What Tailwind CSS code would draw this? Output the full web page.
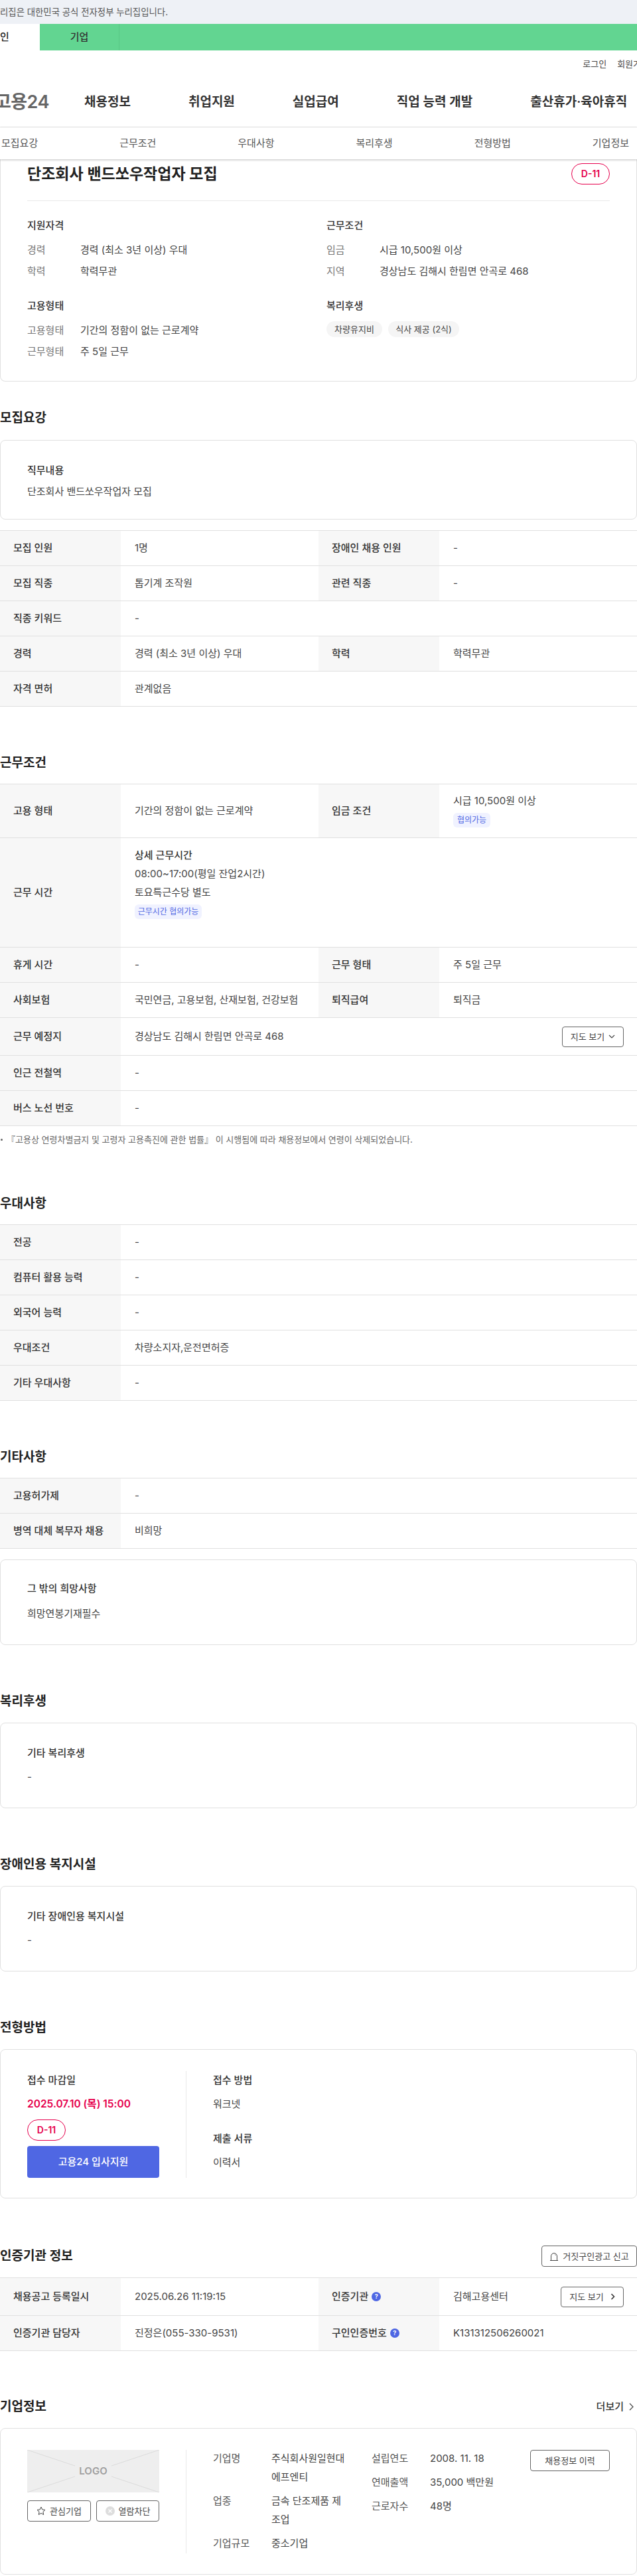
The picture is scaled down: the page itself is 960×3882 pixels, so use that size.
<!DOCTYPE html>
<html lang="ko">
<head>
    <meta charset="UTF-8">
    <title>고용24 채용정보</title>
    <script src="https://cdn.jsdelivr.net/npm/@tailwindcss/browser@4"></script>
</head>
<body class="bg-white">
<div class="w-[960px] overflow-hidden font-[Inter,'Noto_Sans_CJK_KR',sans-serif] text-[15px] leading-6 text-[#444]">

    <!-- top banner -->
    <div class="h-9 bg-[#eef1f6] flex items-center">
        <div class="w-[253px] flex justify-end whitespace-nowrap text-[13.4px] text-[#555]">이 누리집은 대한민국 공식 전자정부 누리집입니다.</div>
    </div>
    <div class="h-10 bg-[#62d591] flex">
        <div class="w-[120px] -ml-[60px] shrink-0 bg-white flex items-center justify-center font-medium text-[#222]">개인</div>
        <div class="w-[120px] shrink-0 border-r border-[#58c786] flex items-center justify-center font-medium text-[#333]">기업</div>
    </div>

    <!-- header -->
    <div class="h-10 flex items-center justify-end gap-4 -mr-[18px] text-[13px] text-[#444]">
        <span class="whitespace-nowrap">로그인</span>
        <span class="whitespace-nowrap">회원가입</span>
    </div>
    <div class="h-[76px] flex items-center border-b border-[#e8e8e8]">
        <div class="w-[74px] shrink-0 flex justify-end whitespace-nowrap text-[27px] font-semibold tracking-[-0.5px] text-[#666]">고용24</div>
        <nav class="ml-[53px] flex gap-[87px] text-[19px] font-semibold text-[#333] whitespace-nowrap">
            <a>채용정보</a>
            <a>취업지원</a>
            <a>실업급여</a>
            <a>직업 능력 개발</a>
            <a>출산휴가·육아휴직</a>
        </nav>
    </div>
    <div class="relative z-10 h-12 pl-[2px] pr-3 flex items-center justify-between bg-white text-[#555] shadow-[0_1px_3px_rgba(0,0,0,0.25)]">
        <a>모집요강</a><a>근무조건</a><a>우대사항</a><a>복리후생</a><a>전형방법</a><a>기업정보</a>
    </div>

    <!-- summary card -->
    <div class="h-[335px] px-10 pt-[6px] border-x border-b border-[#e0e0e0] rounded-b-lg">
        <div class="pb-6 border-b border-[#e8e8e8] flex items-center justify-between">
            <h1 class="text-[23px] font-semibold text-[#222]">단조회사 밴드쏘우작업자 모집</h1>
            <span class="w-[58px] h-8 rounded-2xl border border-[#e6004d] flex items-center justify-center text-sm font-semibold text-[#e6004d]">D-11</span>
        </div>
        <div class="mt-[25px] grid grid-cols-[451px_1fr]">
            <div>
                <h3 class="font-medium text-[#333]">지원자격</h3>
                <div class="mt-[13px] flex flex-col gap-2">
                    <div class="flex"><span class="w-20 text-[#777]">경력</span><span>경력 (최소 3년 이상) 우대</span></div>
                    <div class="flex"><span class="w-20 text-[#777]">학력</span><span>학력무관</span></div>
                </div>
                <h3 class="mt-7 font-medium text-[#333]">고용형태</h3>
                <div class="mt-[13px] flex flex-col gap-2">
                    <div class="flex"><span class="w-20 text-[#777]">고용형태</span><span>기간의 정함이 없는 근로계약</span></div>
                    <div class="flex"><span class="w-20 text-[#777]">근무형태</span><span>주 5일 근무</span></div>
                </div>
            </div>
            <div>
                <h3 class="font-medium text-[#333]">근무조건</h3>
                <div class="mt-[13px] flex flex-col gap-2">
                    <div class="flex"><span class="w-20 text-[#777]">임금</span><span>시급 10,500원 이상</span></div>
                    <div class="flex"><span class="w-20 text-[#777]">지역</span><span>경상남도 김해시 한림면 안곡로 468</span></div>
                </div>
                <h3 class="mt-7 font-medium text-[#333]">복리후생</h3>
                <div class="mt-[11px] flex gap-[9px] text-[13px]">
                    <span class="h-6 w-[84px] rounded-xl bg-[#f5f5f5] flex items-center justify-center">차량유지비</span>
                    <span class="h-6 w-[107px] rounded-xl bg-[#f5f5f5] flex items-center justify-center">식사 제공 (2식)</span>
                </div>
            </div>
        </div>
    </div>

    <!-- 모집요강 -->
    <h2 class="mt-10 h-[30px] text-[19px] leading-[30px] font-semibold text-[#222]">모집요강</h2>
    <div class="mt-[18px] h-[120px] px-10 pt-[33px] border border-[#e0e0e0] rounded-lg">
        <h3 class="font-medium text-[#333]">직무내용</h3>
        <p class="mt-2">단조회사 밴드쏘우작업자 모집</p>
    </div>
    <div class="mt-4 border-t border-[#e0e0e0]">
        <div class="h-[53px] flex border-b border-[#e0e0e0]">
            <div class="w-[182px] shrink-0 pl-5 bg-[#f7f7f7] flex items-center font-medium text-[#333]">모집 인원</div>
            <div class="w-[298px] shrink-0 pl-[21px] flex items-center">1명</div>
            <div class="w-[182px] shrink-0 pl-5 bg-[#f7f7f7] flex items-center font-medium text-[#333]">장애인 채용 인원</div>
            <div class="flex-1 pl-[21px] flex items-center">-</div>
        </div>
        <div class="h-[53px] flex border-b border-[#e0e0e0]">
            <div class="w-[182px] shrink-0 pl-5 bg-[#f7f7f7] flex items-center font-medium text-[#333]">모집 직종</div>
            <div class="w-[298px] shrink-0 pl-[21px] flex items-center">톱기계 조작원</div>
            <div class="w-[182px] shrink-0 pl-5 bg-[#f7f7f7] flex items-center font-medium text-[#333]">관련 직종</div>
            <div class="flex-1 pl-[21px] flex items-center">-</div>
        </div>
        <div class="h-[53px] flex border-b border-[#e0e0e0]">
            <div class="w-[182px] shrink-0 pl-5 bg-[#f7f7f7] flex items-center font-medium text-[#333]">직종 키워드</div>
            <div class="flex-1 pl-[21px] flex items-center">-</div>
        </div>
        <div class="h-[53px] flex border-b border-[#e0e0e0]">
            <div class="w-[182px] shrink-0 pl-5 bg-[#f7f7f7] flex items-center font-medium text-[#333]">경력</div>
            <div class="w-[298px] shrink-0 pl-[21px] flex items-center">경력 (최소 3년 이상) 우대</div>
            <div class="w-[182px] shrink-0 pl-5 bg-[#f7f7f7] flex items-center font-medium text-[#333]">학력</div>
            <div class="flex-1 pl-[21px] flex items-center">학력무관</div>
        </div>
        <div class="h-[53px] flex border-b border-[#e0e0e0]">
            <div class="w-[182px] shrink-0 pl-5 bg-[#f7f7f7] flex items-center font-medium text-[#333]">자격 면허</div>
            <div class="flex-1 pl-[21px] flex items-center">관계없음</div>
        </div>
    </div>

    <!-- 근무조건 -->
    <h2 class="mt-[70px] h-[30px] text-[19px] leading-[30px] font-semibold text-[#222]">근무조건</h2>
    <div class="mt-4 border-t border-[#e0e0e0]">
        <div class="h-[81px] flex border-b border-[#e0e0e0]">
            <div class="w-[182px] shrink-0 pl-5 bg-[#f7f7f7] flex items-center font-medium text-[#333]">고용 형태</div>
            <div class="w-[298px] shrink-0 pl-[21px] flex items-center">기간의 정함이 없는 근로계약</div>
            <div class="w-[182px] shrink-0 pl-5 bg-[#f7f7f7] flex items-center font-medium text-[#333]">임금 조건</div>
            <div class="flex-1 pl-[21px] pt-[13px]">
                <p>시급 10,500원 이상</p>
                <span class="mt-[6px] h-[22px] w-14 rounded-md bg-[#f0f2ff] flex items-center justify-center text-xs text-[#4f67e3]">협의가능</span>
            </div>
        </div>
        <div class="h-[165px] flex border-b border-[#e0e0e0]">
            <div class="w-[182px] shrink-0 pl-5 bg-[#f7f7f7] flex items-center font-medium text-[#333]">근무 시간</div>
            <div class="flex-1 pl-[21px] pt-3 leading-7">
                <p class="font-medium text-[#333]">상세 근무시간</p>
                <p>08:00~17:00(평일 잔업2시간)</p>
                <p>토요특근수당 별도</p>
                <span class="mt-1 h-[22px] w-[101px] rounded-md bg-[#f0f2ff] flex items-center justify-center text-xs text-[#4f67e3]">근무시간 협의가능</span>
            </div>
        </div>
        <div class="h-[53px] flex border-b border-[#e0e0e0]">
            <div class="w-[182px] shrink-0 pl-5 bg-[#f7f7f7] flex items-center font-medium text-[#333]">휴게 시간</div>
            <div class="w-[298px] shrink-0 pl-[21px] flex items-center">-</div>
            <div class="w-[182px] shrink-0 pl-5 bg-[#f7f7f7] flex items-center font-medium text-[#333]">근무 형태</div>
            <div class="flex-1 pl-[21px] flex items-center">주 5일 근무</div>
        </div>
        <div class="h-[53px] flex border-b border-[#e0e0e0]">
            <div class="w-[182px] shrink-0 pl-5 bg-[#f7f7f7] flex items-center font-medium text-[#333]">사회보험</div>
            <div class="w-[298px] shrink-0 pl-[21px] flex items-center">국민연금, 고용보험, 산재보험, 건강보험</div>
            <div class="w-[182px] shrink-0 pl-5 bg-[#f7f7f7] flex items-center font-medium text-[#333]">퇴직급여</div>
            <div class="flex-1 pl-[21px] flex items-center">퇴직금</div>
        </div>
        <div class="h-[57px] flex border-b border-[#e0e0e0]">
            <div class="w-[182px] shrink-0 pl-5 bg-[#f7f7f7] flex items-center font-medium text-[#333]">근무 예정지</div>
            <div class="flex-1 pl-[21px] pr-5 flex items-center justify-between">
                <span>경상남도 김해시 한림면 안곡로 468</span>
                <button class="w-[93px] h-[31px] rounded border border-[#666] flex items-center justify-center gap-[6px] text-[13px]">
                    지도 보기
                    <svg width="10" height="6" viewBox="0 0 10 6" fill="none" stroke="#444" stroke-width="1.2"><path d="M1 1l4 4 4-4"/></svg>
                </button>
            </div>
        </div>
        <div class="h-[53px] flex border-b border-[#e0e0e0]">
            <div class="w-[182px] shrink-0 pl-5 bg-[#f7f7f7] flex items-center font-medium text-[#333]">인근 전철역</div>
            <div class="flex-1 pl-[21px] flex items-center">-</div>
        </div>
        <div class="h-[53px] flex border-b border-[#e0e0e0]">
            <div class="w-[182px] shrink-0 pl-5 bg-[#f7f7f7] flex items-center font-medium text-[#333]">버스 노선 번호</div>
            <div class="flex-1 pl-[21px] flex items-center">-</div>
        </div>
    </div>
    <p class="mt-[10px] h-5 flex items-center gap-[6px] text-[13px] leading-5 text-[#666]">
        <span class="ml-[1px] w-[3px] h-[3px] rounded-full bg-[#666]"></span>
        <span>『고용상 연령차별금지 및 고령자 고용촉진에 관한 법률』 이 시행됨에 따라 채용정보에서 연령이 삭제되었습니다.</span>
    </p>

    <!-- 우대사항 -->
    <h2 class="mt-[72px] h-[30px] text-[19px] leading-[30px] font-semibold text-[#222]">우대사항</h2>
    <div class="mt-4 border-t border-[#e0e0e0]">
        <div class="h-[53px] flex border-b border-[#e0e0e0]">
            <div class="w-[182px] shrink-0 pl-5 bg-[#f7f7f7] flex items-center font-medium text-[#333]">전공</div>
            <div class="flex-1 pl-[21px] flex items-center">-</div>
        </div>
        <div class="h-[53px] flex border-b border-[#e0e0e0]">
            <div class="w-[182px] shrink-0 pl-5 bg-[#f7f7f7] flex items-center font-medium text-[#333]">컴퓨터 활용 능력</div>
            <div class="flex-1 pl-[21px] flex items-center">-</div>
        </div>
        <div class="h-[53px] flex border-b border-[#e0e0e0]">
            <div class="w-[182px] shrink-0 pl-5 bg-[#f7f7f7] flex items-center font-medium text-[#333]">외국어 능력</div>
            <div class="flex-1 pl-[21px] flex items-center">-</div>
        </div>
        <div class="h-[53px] flex border-b border-[#e0e0e0]">
            <div class="w-[182px] shrink-0 pl-5 bg-[#f7f7f7] flex items-center font-medium text-[#333]">우대조건</div>
            <div class="flex-1 pl-[21px] flex items-center">차량소지자,운전면허증</div>
        </div>
        <div class="h-[53px] flex border-b border-[#e0e0e0]">
            <div class="w-[182px] shrink-0 pl-5 bg-[#f7f7f7] flex items-center font-medium text-[#333]">기타 우대사항</div>
            <div class="flex-1 pl-[21px] flex items-center">-</div>
        </div>
    </div>

    <!-- 기타사항 -->
    <h2 class="mt-[70px] h-[30px] text-[19px] leading-[30px] font-semibold text-[#222]">기타사항</h2>
    <div class="mt-4 border-t border-[#e0e0e0]">
        <div class="h-[53px] flex border-b border-[#e0e0e0]">
            <div class="w-[182px] shrink-0 pl-5 bg-[#f7f7f7] flex items-center font-medium text-[#333]">고용허가제</div>
            <div class="flex-1 pl-[21px] flex items-center">-</div>
        </div>
        <div class="h-[53px] flex border-b border-[#e0e0e0]">
            <div class="w-[182px] shrink-0 pl-5 bg-[#f7f7f7] flex items-center font-medium text-[#333]">병역 대체 복무자 채용</div>
            <div class="flex-1 pl-[21px] flex items-center">비희망</div>
        </div>
    </div>
    <div class="mt-4 h-[129px] px-10 pt-[31px] border border-[#e0e0e0] rounded-lg">
        <h3 class="font-medium text-[#333]">그 밖의 희망사항</h3>
        <p class="mt-[14px]">희망연봉기재필수</p>
    </div>

    <!-- 복리후생 -->
    <h2 class="mt-[70px] h-[30px] text-[19px] leading-[30px] font-semibold text-[#222]">복리후생</h2>
    <div class="mt-[17px] h-[129px] px-10 pt-[33px] border border-[#e0e0e0] rounded-lg">
        <h3 class="font-medium text-[#333]">기타 복리후생</h3>
        <p class="mt-3">-</p>
    </div>

    <!-- 장애인용 복지시설 -->
    <h2 class="mt-[70px] h-[30px] text-[19px] leading-[30px] font-semibold text-[#222]">장애인용 복지시설</h2>
    <div class="mt-[17px] h-[129px] px-10 pt-[33px] border border-[#e0e0e0] rounded-lg">
        <h3 class="font-medium text-[#333]">기타 장애인용 복지시설</h3>
        <p class="mt-3">-</p>
    </div>

    <!-- 전형방법 -->
    <h2 class="mt-[70px] h-[30px] text-[19px] leading-[30px] font-semibold text-[#222]">전형방법</h2>
    <div class="mt-[17px] h-[225px] px-10 pt-8 border border-[#e0e0e0] rounded-lg flex leading-7">
        <div class="w-[240px] h-[161px] pr-10 border-r border-[#e8e8e8]">
            <p class="font-medium text-[#333]">접수 마감일</p>
            <p class="mt-2 text-[15.5px] font-semibold text-[#e6004d]">2025.07.10 (목) 15:00</p>
            <span class="mt-[9px] w-[58px] h-8 rounded-2xl border border-[#e6004d] flex items-center justify-center text-sm font-semibold text-[#e6004d]">D-11</span>
            <button class="mt-2 w-[199px] h-12 rounded bg-[#4f67e3] text-white font-medium">고용24 입사지원</button>
        </div>
        <div class="pl-10">
            <p class="font-medium text-[#333]">접수 방법</p>
            <p class="mt-2">워크넷</p>
            <p class="mt-6 font-medium text-[#333]">제출 서류</p>
            <p class="mt-2">이력서</p>
        </div>
    </div>

    <!-- 인증기관 정보 -->
    <div class="mt-[71px] h-8 flex items-center justify-between">
        <h2 class="text-[19px] font-semibold text-[#222]">인증기관 정보</h2>
        <button class="w-[144px] h-8 rounded border border-[#666] flex items-center justify-center gap-[6px] text-[13px]">
            <svg width="14" height="13" viewBox="0 0 14 13" fill="none" stroke="#444" stroke-width="1"><path d="M1 12.5h12M2.5 12.5V6a4.5 4.5 0 0 1 9 0v6.5M8.5 3.5a2 2 0 0 1 .8 1.2"/></svg>
            거짓구인광고 신고
        </button>
    </div>
    <div class="mt-4 border-t border-[#e0e0e0]">
        <div class="h-[57px] flex border-b border-[#e0e0e0]">
            <div class="w-[182px] shrink-0 pl-5 bg-[#f7f7f7] flex items-center font-medium text-[#333]">채용공고 등록일시</div>
            <div class="w-[298px] shrink-0 pl-[21px] flex items-center">2025.06.26 11:19:15</div>
            <div class="w-[182px] shrink-0 pl-5 bg-[#f7f7f7] flex items-center gap-[5px] font-medium text-[#333]">
                인증기관
                <span class="w-[14px] h-[14px] rounded-full bg-[#4f67e3] flex items-center justify-center text-[9px] font-bold text-white">?</span>
            </div>
            <div class="flex-1 pl-[21px] pr-5 flex items-center justify-between">
                <span>김해고용센터</span>
                <button class="w-[95px] h-[31px] rounded border border-[#666] flex items-center justify-center gap-[10px] text-[13px]">
                    지도 보기
                    <svg width="7" height="10" viewBox="0 0 7 10" fill="none" stroke="#333" stroke-width="1.6"><path d="M1.5 1l4 4-4 4"/></svg>
                </button>
            </div>
        </div>
        <div class="h-[53px] flex border-b border-[#e0e0e0]">
            <div class="w-[182px] shrink-0 pl-5 bg-[#f7f7f7] flex items-center font-medium text-[#333]">인증기관 담당자</div>
            <div class="w-[298px] shrink-0 pl-[21px] flex items-center">진정은(055-330-9531)</div>
            <div class="w-[182px] shrink-0 pl-5 bg-[#f7f7f7] flex items-center gap-[5px] font-medium text-[#333]">
                구인인증번호
                <span class="w-[14px] h-[14px] rounded-full bg-[#4f67e3] flex items-center justify-center text-[9px] font-bold text-white">?</span>
            </div>
            <div class="flex-1 pl-[21px] flex items-center">K131312506260021</div>
        </div>
    </div>

    <!-- 기업정보 -->
    <div class="mt-[69px] h-[30px] pr-[5px] flex items-center justify-between">
        <h2 class="text-[19px] font-semibold text-[#222]">기업정보</h2>
        <a class="flex items-center gap-2 font-medium text-[#333]">
            더보기
            <svg width="7" height="12" viewBox="0 0 7 12" fill="none" stroke="#444" stroke-width="1.2"><path d="M1 1l5 5-5 5"/></svg>
        </a>
    </div>
    <div class="mt-[17px] h-[221px] px-10 pt-8 border border-[#e0e0e0] rounded-lg flex leading-7">
        <div class="w-[240px] h-[156px] pr-10 border-r border-[#e8e8e8]">
            <div class="relative h-16 bg-[#eeeeee] flex items-center justify-center text-[15px] font-semibold text-[#a0a0a0]">
                <svg class="absolute inset-0" width="199" height="64" viewBox="0 0 199 64" stroke="#dcdcdc"><path d="M0 0L72 24M0 64L72 40M199 0L127 24M199 64L127 40" fill="none"/></svg>
                LOGO
            </div>
            <div class="mt-3 flex gap-2 text-[13px]">
                <button class="w-24 h-8 rounded border border-[#666] flex items-center justify-center gap-[6px]">
                    <svg width="14" height="14" viewBox="0 0 14 14" fill="none" stroke="#444"><path d="M7 1l1.8 3.9 4.2.5-3.1 2.9.8 4.2L7 10.4l-3.7 2.1.8-4.2L1 5.4l4.2-.5z"/></svg>
                    관심기업
                </button>
                <button class="w-[95px] h-8 rounded border border-[#666] flex items-center justify-center gap-[6px]">
                    <svg width="14" height="14" viewBox="0 0 14 14"><circle cx="7" cy="7" r="7" fill="#dddddd"/><path d="M4.5 4.5l5 5M9.5 4.5l-5 5" stroke="#fff" stroke-width="1.2"/></svg>
                    열람차단
                </button>
            </div>
        </div>
        <div class="pl-10 -mt-px w-[279px] flex flex-col gap-2">
            <div class="flex"><span class="w-[88px] shrink-0 text-[#555]">기업명</span><span class="w-[115px] shrink-0">주식회사원일현대에프엔티</span></div>
            <div class="flex"><span class="w-[88px] shrink-0 text-[#555]">업종</span><span class="w-[115px] shrink-0">금속 단조제품 제조업</span></div>
            <div class="flex"><span class="w-[88px] shrink-0 text-[#555]">기업규모</span><span class="w-[115px] shrink-0">중소기업</span></div>
        </div>
        <div class="-mt-px w-[239px] flex flex-col gap-2">
            <div class="flex"><span class="w-[88px] shrink-0 text-[#555]">설립연도</span><span>2008. 11. 18</span></div>
            <div class="flex"><span class="w-[88px] shrink-0 text-[#555]">연매출액</span><span>35,000 백만원</span></div>
            <div class="flex"><span class="w-[88px] shrink-0 text-[#555]">근로자수</span><span>48명</span></div>
        </div>
        <button class="w-[120px] h-8 rounded border border-[#666] text-[13px]">채용정보 이력</button>
    </div>
</div>
</body>
</html>
